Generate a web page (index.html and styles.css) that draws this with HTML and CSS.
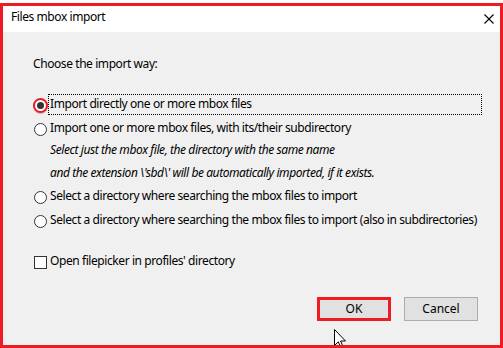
FILE: index.html
```html
<!DOCTYPE html>
<html>
<head>
<meta charset="utf-8">
<link rel="stylesheet" href="styles.css">
</head>
<body>
<div class="dialog">
  <div class="titlebar">
    <span class="title">Files mbox import</span>
    <svg class="close" width="10" height="10" viewBox="0 0 10 10"><path d="M0.5 0.5 L9.5 9.5 M9.5 0.5 L0.5 9.5" stroke="#000" stroke-width="1.1" fill="none"/></svg>
  </div>
  <div class="content">
    <div class="prompt">Choose the import way:</div>
    <div class="options">
      <div class="opt"><span class="radio checked"><span class="dot"></span></span><span class="label focus">Import directly one or more mbox files</span></div>
      <div class="opt"><span class="radio"></span><span class="label">Import one or more mbox files, with its/their subdirectory</span></div>
      <div class="note">Select just the mbox file, the directory with the same name<br>and the extension \'sbd\' will be automatically imported, if it exists.</div>
      <div class="opt"><span class="radio"></span><span class="label">Select a directory where searching the mbox files to import</span></div>
      <div class="opt"><span class="radio"></span><span class="label">Select a directory where searching the mbox files to import (also in subdirectories)</span></div>
    </div>
    <div class="opt check"><span class="box"></span><span class="label">Open filepicker in profiles' directory</span></div>
    <div class="buttons">
      <button class="btn ok">OK</button>
      <button class="btn">Cancel</button>
    </div>
    <svg class="cursor" width="13" height="20" viewBox="0 0 13 20"><path d="M0.5 0.5 L0.5 16.5 L4.3 12.8 L6.8 18.6 L9 17.6 L6.6 12 L11.5 12 Z" fill="#fff" stroke="#000" stroke-width="1" stroke-linejoin="miter"/></svg>
  </div>
</div>
</body>
</html>
```

FILE: styles.css
```css
* { box-sizing: border-box; }
html, body { margin: 0; padding: 0; background: #ffffff; }
body { font-family: "Noto Sans", "Liberation Sans", sans-serif; font-size: 12px; line-height: 16px; letter-spacing: -0.42px; color: #000; }

.dialog {
  margin-top: 3px;
  width: 503px;
  height: 345px;
  border: 3px solid #ed1c24;
  background: #f0f0f0;
  display: flex;
  flex-direction: column;
  overflow: hidden;
}

.titlebar {
  height: 26px;
  background: #ffffff;
  display: flex;
  align-items: flex-start;
  padding: 3px 6px 0 8px;
  flex: none;
}
.title { flex: 1; }
.close { margin-top: 5px; }

.content {
  position: relative;
  flex: 1;
  padding: 24px 0 0 31px;
}
.prompt { margin-left: -1px; }

.options {
  margin-top: 22px;
  display: flex;
  flex-direction: column;
  gap: 3px;
}
.opt { display: flex; align-items: center; height: 21px; }
.radio {
  width: 13px; height: 13px;
  border: 1px solid #333;
  border-radius: 50%;
  background: #fff;
  flex: none;
  margin-top: 1px;
  display: flex; align-items: center; justify-content: center;
}
.radio.checked {
  width: 15px; height: 15px;
  margin-left: -1px; margin-right: -1px;
  border: 2px solid #ed1c24;
  box-shadow: 0 1px 1px rgba(0,0,0,0.2);
}
.dot { width: 7px; height: 7px; border-radius: 50%; background: #333; }
.label {
  flex: none;
  margin-left: 1px;
  padding: 1px 1px 2px 1px;
  border: 1px solid transparent;
  white-space: nowrap;
}
.label.focus { border: 1px dotted #000; width: 434px; }

.note {
  margin: -4px 0 -1px 16px;
  font-style: italic;
  line-height: 23px;
}

.check { margin-top: 20px; }
.box { width: 13px; height: 13px; border: 1px solid #333; background: #fff; flex: none; margin-top: 1px; }

.buttons {
  margin-top: 25px;
  display: flex;
  justify-content: flex-end;
  gap: 13px;
  padding-right: 22px;
}
.btn {
  font: inherit;
  width: 74px;
  height: 24px;
  background: #e1e1e1;
  border: 1px solid #adadad;
  color: #000;
  padding: 0;
}
.btn.ok { border: 3px solid #ed1c24; }

.cursor { position: absolute; left: 331px; top: 297px; }
```
